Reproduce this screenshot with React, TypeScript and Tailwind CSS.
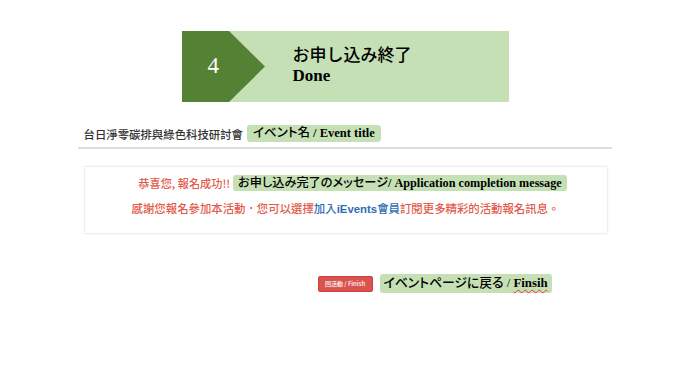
import React from "react";

const serif = "font-['Liberation_Serif','Noto_Sans_CJK_JP',serif]";

export default function App() {
  return (
    <div className="w-[689px] h-[387px] bg-white font-['Noto_Sans_CJK_TC','Liberation_Sans',sans-serif]">
      <div className="flex justify-center pt-[31px] pl-[1px]">
        <div className="flex w-[327px] h-[71px] bg-[#c5e0b4]">
          <div className="relative w-[83px] h-[71px]">
            <svg width="83" height="71" viewBox="0 0 83 71" className="block">
              <polygon points="0,0 47,0 83,35.5 47,71 0,71" fill="#548235" />
            </svg>
            <span className="absolute left-[26px] top-[22px] text-[23px] leading-[26px] text-white font-['Liberation_Serif',serif]">
              4
            </span>
          </div>
          <div className="flex flex-col justify-center pl-[28px] pb-[4px] text-black">
            <div className="text-[17px] leading-[23px] font-medium font-['Noto_Sans_CJK_JP',sans-serif]">
              お申し込み終了
            </div>
            <div className="text-[17px] leading-[22px] font-bold font-['Liberation_Serif',serif]">
              Done
            </div>
          </div>
        </div>
      </div>

      <div className="w-[534px] mx-auto mt-[22px]">
        <div className="flex items-center h-[19px] pl-[6px] gap-[4px]">
          <span className="text-[11.4px] leading-[14px] text-[#333] font-medium">
            台日淨零碳排與綠色科技研討會
          </span>
          <span
            className={`${serif} [font-feature-settings:'palt'] bg-[#c5e0b4] rounded-[3px] px-[6px] h-[17px] leading-[17px] text-[12.5px] text-black`}
          >
            <span className="font-medium">イベント名</span>
            <span className="font-bold"> / Event title</span>
          </span>
        </div>
        <div className="h-[2px] bg-[#dddddd] mt-[4px]" />

        <div className="ml-[6px] w-[524px] mt-[17px] border border-[#eeeeee] shadow-[0_0_2px_rgba(0,0,0,0.05)] pt-[8px] pb-[16px] text-center">
          <div className="flex justify-center items-center gap-[3px] pl-[14px]">
            <span className="text-[11.2px] leading-[16px] text-[#e25b4b] font-medium">
              恭喜您, 報名成功!!
            </span>
            <span
              className={`${serif} [font-feature-settings:'palt'] bg-[#c5e0b4] rounded-[3px] px-[5px] h-[16px] leading-[16px] text-[12.2px] text-black`}
            >
              <span className="font-medium">お申し込み完了のメッセージ</span>
              <span className="font-bold">/ Application completion message</span>
            </span>
          </div>
          <div className="mt-[9px] text-[11.4px] leading-[16px] text-[#e25b4b] font-medium">
            感謝您報名參加本活動．您可以選擇
            <span className="text-[#2f6db5] font-medium">加入</span>
            <span className="text-[#2f6db5] font-bold font-['Liberation_Sans',sans-serif]">iEvents</span>
            <span className="text-[#2f6db5] font-medium">會員</span>
            訂閱更多精彩的活動報名訊息。
          </div>
        </div>

        <div className="flex items-center mt-[40px] ml-[240px] gap-[7px]">
          <span className="w-[55px] h-[16px] bg-[#d9534f] border border-[#d43f3a] rounded-[2px] flex items-center justify-center text-white text-[6px] leading-[8px] font-medium">
            回活動 / Finish
          </span>
          <span
            className={`${serif} [font-feature-settings:'palt'] bg-[#c5e0b4] rounded-[3px] px-[4px] h-[19px] leading-[19px] text-[12.8px] text-black`}
          >
            <span className="font-medium">イベントページに戻る / </span>
            <span className="font-bold underline decoration-wavy decoration-[#e53935] decoration-1 underline-offset-2">Finsih</span>
          </span>
        </div>
      </div>
    </div>
  );
}
